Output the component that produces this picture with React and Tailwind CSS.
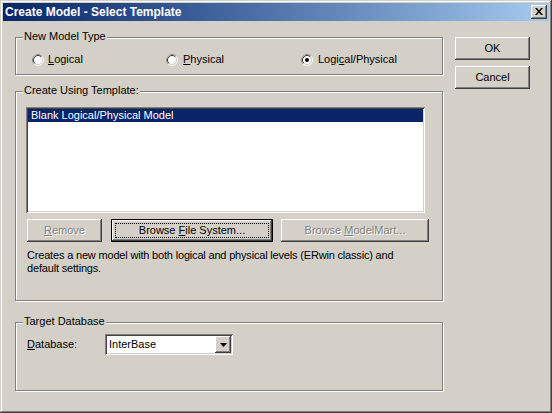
import React from 'react';

const raised =
  'shadow-[inset_-1px_-1px_0_#404040,inset_1px_1px_0_#ffffff,inset_-2px_-2px_0_#808080,inset_2px_2px_0_#d4d0c8]';
const sunken =
  'shadow-[inset_1px_1px_0_#808080,inset_-1px_-1px_0_#ffffff,inset_2px_2px_0_#404040,inset_-2px_-2px_0_#d4d0c8]';

function Radio({ checked }) {
  return (
    <svg width="12" height="12" viewBox="0 0 12 12" className="shrink-0">
      <circle cx="6" cy="6" r="5.5" fill="none" stroke="#ffffff" />
      <path d="M2.11 9.89 A5.5 5.5 0 0 1 9.89 2.11" fill="none" stroke="#808080" />
      <circle cx="6" cy="6" r="4.5" fill="#ffffff" stroke="#d4d0c8" />
      <path d="M2.82 9.18 A4.5 4.5 0 0 1 9.18 2.82" fill="none" stroke="#404040" />
      {checked && <circle cx="6" cy="6" r="2" fill="#000000" />}
    </svg>
  );
}

function Group({ label, className, children }) {
  return (
    <div
      className={`relative border border-[#808080] shadow-[inset_1px_1px_0_#ffffff,1px_1px_0_#ffffff] ${className}`}
    >
      <span className="absolute left-[7px] top-[-8px] bg-[#d4d0c8] px-[1px] leading-[13px]">{label}</span>
      {children}
    </div>
  );
}

function Button({ children, disabled, isDefault, className = '' }) {
  if (isDefault) {
    return (
      <div className={`flex h-[23px] border border-black bg-[#d4d0c8] ${className}`}>
        <div className={`flex flex-1 p-[3px] ${raised}`}>
          <div className="flex flex-1 items-center justify-center border border-dotted border-black leading-[13px]">
            {children}
          </div>
        </div>
      </div>
    );
  }
  return (
    <div
      className={`flex h-[23px] items-center justify-center bg-[#d4d0c8] leading-[13px] ${raised} ${
        disabled ? 'text-[#808080] [text-shadow:1px_1px_0_#ffffff]' : ''
      } ${className}`}
    >
      {children}
    </div>
  );
}

export default function App() {
  return (
    <div
      className={`flex h-[413px] w-[552px] flex-col bg-[#d4d0c8] p-[3px] font-['Liberation_Sans',Arial,sans-serif] text-[11px] text-black shadow-[inset_-1px_-1px_0_#404040,inset_1px_1px_0_#d4d0c8,inset_-2px_-2px_0_#808080,inset_2px_2px_0_#ffffff]`}
    >
      <div className="flex h-[18px] items-center justify-between bg-gradient-to-r from-[#0a246a] to-[#a6caf0] pl-[2px] pr-[2px]">
        <span className="text-[12px] font-bold text-white">Create Model - Select Template</span>
        <div className={`flex h-[14px] w-[16px] items-center justify-center bg-[#d4d0c8] ${raised}`}>
          <svg width="8" height="7" viewBox="0 0 8 7" className="mb-[1px]">
            <path d="M0 0h2l2 2.5L6 0h2L5 3.5 8 7H6L4 4.5 2 7H0l3-3.5z" fill="#000000" />
          </svg>
        </div>
      </div>

      <div className="flex flex-1 pl-[12px] pt-[16px]">
        <div className="flex w-[428px] flex-col">
          <Group label="New Model Type" className="h-[38px]">
            <div className="flex items-center pl-[16px] pt-[15px]">
              <div className="flex w-[134px] items-center gap-[4px]">
                <Radio />
                <span className="leading-[13px]">
                  <u>L</u>ogical
                </span>
              </div>
              <div className="flex w-[135px] items-center gap-[5px]">
                <Radio />
                <span className="leading-[13px]">
                  <u>P</u>hysical
                </span>
              </div>
              <div className="flex items-center gap-[5px]">
                <Radio checked />
                <span className="leading-[13px]">
                  Logi<u>c</u>al/Physical
                </span>
              </div>
            </div>
          </Group>

          <Group label="Create Using Template:" className="mt-[16px] h-[210px]">
            <div className="flex flex-col pl-[10px] pt-[15px]">
              <div className={`h-[106px] w-[399px] bg-white p-[2px] ${sunken}`}>
                <div className="h-[13px] bg-[#0a246a] pl-[3px] leading-[13px] text-white">
                  Blank Logical/Physical Model
                </div>
              </div>
              <div className="mt-[6px] flex pl-[1px]">
                <Button disabled className="w-[75px]">
                  <span>
                    <u>R</u>emove
                  </span>
                </Button>
                <Button isDefault className="ml-[9px] w-[162px]">
                  <span>
                    Browse <u>F</u>ile System...
                  </span>
                </Button>
                <Button disabled className="ml-[8px] w-[148px]">
                  <span>
                    Browse <u>M</u>odelMart...
                  </span>
                </Button>
              </div>
              <p className="mt-[7px] pl-[1px] leading-[13px] tracking-[-0.18px]">
                Creates a new model with both logical and physical levels (ERwin classic) and
                <br />
                default settings.
              </p>
            </div>
          </Group>

          <Group label="Target Database" className="mt-[21px] h-[69px]">
            <div className="flex items-center pl-[11px] pt-[11px]">
              <span className="w-[78px] leading-[13px]">
                <u>D</u>atabase:
              </span>
              <div className={`flex h-[21px] w-[128px] items-stretch bg-white p-[2px] ${sunken}`}>
                <span className="flex flex-1 items-center pl-[2px] leading-[13px]">InterBase</span>
                <div className={`flex w-[16px] items-center justify-center bg-[#d4d0c8] ${raised}`}>
                  <svg width="7" height="4" viewBox="0 0 7 4">
                    <path d="M0 0h7L3.5 4z" fill="#000000" />
                  </svg>
                </div>
              </div>
            </div>
          </Group>
        </div>

        <div className="ml-[12px] flex w-[75px] flex-col gap-[6px]">
          <Button>OK</Button>
          <Button>Cancel</Button>
        </div>
      </div>
    </div>
  );
}
